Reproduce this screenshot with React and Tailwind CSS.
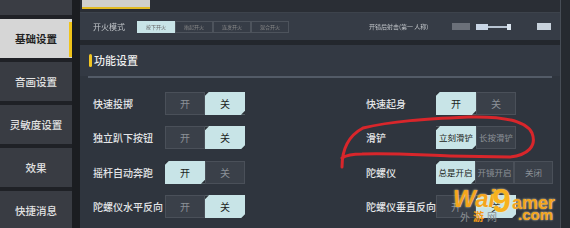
const font = "font-['Noto_Sans_CJK_SC','Noto_Sans',sans-serif]";

function Corner() {
  return (
    <>
      <span className="absolute left-0 top-0 w-[4px] h-[4px] bg-[#2b3037] [clip-path:polygon(0_0,100%_0,0_100%)]" />
      <span className="absolute right-0 bottom-0 w-[4px] h-[4px] bg-[#2b3037] [clip-path:polygon(100%_0,100%_100%,0_100%)]" />
    </>
  );
}

function Seg({options, active, w = "w-[40px]"}) {
  return (
    <div className="flex">
      {options.map((o, i) => (
        <div
          key={o}
          className={
            "relative h-[23px] flex items-center justify-center whitespace-nowrap " +
            (o.length > 1 ? "text-[8.5px] " : "text-[10px] ") + w + " " +
            (i === active
              ? "bg-[#c8e4e7] text-[#1b1d20]"
              : "bg-[#3a4049] text-[#8c9198] border border-[#4a5059]")
          }
        >
          {i === active && <Corner />}
          {o}
        </div>
      ))}
    </div>
  );
}

function Row({left, leftOpts, leftActive, right, rightOpts, rightActive, rightW}) {
  return (
    <div className="h-[34.5px] flex items-center pl-[13px]">
      <div className="w-[273px] flex items-center">
        <span className="w-[72px] whitespace-nowrap text-[10px] font-medium text-[#e4e6e8]">{left}</span>
        <Seg options={leftOpts} active={leftActive} />
      </div>
      <span className="w-[70px] whitespace-nowrap text-[10px] font-medium text-[#e4e6e8]">{right}</span>
      <Seg options={rightOpts} active={rightActive} w={rightW} />
    </div>
  );
}

function Sidebar() {
  const items = ["音画设置", "灵敏度设置", "效果", "快捷消息"];
  return (
    <div className="w-[72px] flex flex-col gap-[4px] bg-[#1f2126]">
      <div className="h-[15px] shrink-0 bg-[#3a3d44]" />
      <div className="relative h-[39px] shrink-0 bg-[#d6d6d6] flex items-center justify-center text-[10.5px] font-bold text-[#1f1f1f]">
        基础设置
        <span className="absolute right-0 top-[3px] bottom-[1px] w-[3px] bg-[#f0c419]" />
      </div>
      {items.map(t => (
        <div key={t} className="h-[39px] shrink-0 bg-[#393c43] flex items-center justify-center text-[10.5px] font-medium text-[#e2e2e2]">
          {t}
        </div>
      ))}
    </div>
  );
}

function Watermark() {
  return (
    <div className="absolute left-[448px] top-[180px] w-[122px] h-[48px] pointer-events-none font-['Liberation_Sans',sans-serif] font-bold leading-none text-[#f4a51c] [text-shadow:0_0_2px_#fff3c4]">
      <span className="absolute left-[5px] top-[7px] text-[24px] italic">Wai</span>
      <span className="absolute left-[44px] top-[3px] text-[34px] text-[#f7b21e]">9</span>
      <span className="absolute left-[64px] top-[14px] text-[18px]">amer</span>
      <span className="absolute left-[70px] top-[27px] text-[15px]">.com</span>
      <span className="absolute left-[12px] top-[31px] flex items-center [text-shadow:none] font-['Noto_Sans_CJK_SC',sans-serif]">
        <span className="text-[10px] font-normal text-[#8a8f93]">外</span>
        <span className="ml-[3px] text-[11px] text-[#f39a16]">游</span>
        <span className="ml-[3px] text-[10px] font-normal text-[#8a8f93]">网</span>
      </span>
    </div>
  );
}

export default function App() {
  return (
    <div className={"relative w-[570px] h-[228px] overflow-hidden flex bg-[#1d1f23] " + font}>
      <Sidebar />
      <div className="w-[8px] bg-[#1b1d21]" />
      <div className="w-[480px] flex flex-col bg-[#2f353e]">
        <div className="h-[13px] bg-[#2a2e35] border-b border-[#3d434c]">
          <div className="ml-[2px] w-[68px] h-[9px] bg-[#d0d0cc] border-b-2 border-[#e2bb22]" />
        </div>
        <div className="h-[27px] flex items-center pl-[13px] bg-[#363c46] blur-[0.6px]">
          <span className="w-[44px] whitespace-nowrap text-[8px] text-[#c4c8cc]">开火模式</span>
          <div className="flex h-[12px]">
            <div className="w-[38px] bg-[#c8e4e7] text-[5px] text-[#666] flex items-center justify-center whitespace-nowrap">按下开火</div>
            <div className="w-[38px] border border-[#4d535c] text-[5px] text-[#888] flex items-center justify-center whitespace-nowrap">抬起开火</div>
            <div className="w-[38px] border border-[#4d535c] text-[5px] text-[#888] flex items-center justify-center whitespace-nowrap">连发开火</div>
            <div className="w-[38px] border border-[#4d535c] text-[5px] text-[#888] flex items-center justify-center whitespace-nowrap">混合开火</div>
          </div>
          <span className="ml-[80px] w-[75px] whitespace-nowrap text-[6px] text-[#c4c8cc]">开镜后射击(第一 人称)</span>
          <div className="ml-[8px] w-[18px] h-[7px] bg-[#6b7079]" />
          <div className="ml-[6px] w-[35px] h-[6px] flex items-center">
            <div className="w-[12px] h-[6px] bg-[#c9d6e6]" />
            <div className="flex-1 h-[2px] bg-[#b8c4d2]" />
            <div className="w-[4px] h-[6px] bg-[#dce6f0]" />
          </div>
          <div className="ml-[26px] w-[14px] h-[7px] bg-[#c8d2dc]" />
        </div>
        <div className="h-[5px] bg-[#23272d]" />
        <div className="h-[31px] flex items-center pl-[9px] bg-[#333943]">
          <span className="w-[3px] h-[13px] rounded-sm bg-[#f2c522]" />
          <span className="ml-[2px] text-[11px] font-medium text-[#f0f0f0]">功能设置</span>
        </div>
        <div className="mx-[8px] h-[2px] bg-[#535b67]" />
        <div className="pt-[8px] flex flex-col">
          <Row left="快速投掷" leftOpts={["开", "关"]} leftActive={1} right="快速起身" rightOpts={["开", "关"]} rightActive={0} />
          <Row left="独立趴下按钮" leftOpts={["开", "关"]} leftActive={1} right="滑铲" rightOpts={["立刻滑铲", "长按滑铲"]} rightActive={0} />
          <Row left="摇杆自动奔跑" leftOpts={["开", "关"]} leftActive={0} right="陀螺仪" rightOpts={["总是开启", "开镜开启", "关闭"]} rightActive={0} rightW="w-[39px]" />
          <Row left="陀螺仪水平反向" leftOpts={["开", "关"]} leftActive={1} right="陀螺仪垂直反向" rightOpts={["开", "关"]} rightActive={1} />
        </div>
      </div>
      <div className="flex-1 bg-[#262a30] border-l border-[#474d56]" />

      <svg className="absolute left-0 top-0 pointer-events-none" width="570" height="228">
        <path
          d="M342 167 C342 150 348 136 363 128 C392 121 425 119 468 117 C505 116 526 121 532 133 C537 146 528 155 510 157 L450 156 C420 155 392 153 362 154 C352 154 345 156 342 158"
          fill="none"
          stroke="#d8262b"
          strokeWidth="3"
          strokeLinecap="round"
        />
      </svg>

      <Watermark />
    </div>
  );
}
